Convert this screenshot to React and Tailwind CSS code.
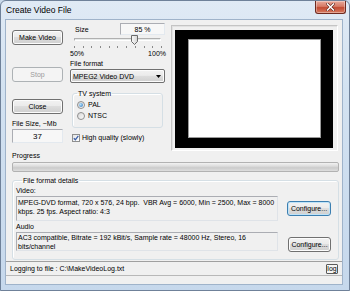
import React from "react";

const btn =
  "flex items-center justify-center rounded-[3px] border border-[#707070] bg-[linear-gradient(#f2f2f2_0%,#ebebeb_45%,#dddddd_50%,#cfcfcf_100%)] shadow-[inset_0_0_0_1px_#fcfcfc] text-black leading-none";

function Radio({ checked, label }) {
  return (
    <div className="flex items-center h-[9px] leading-[9px]">
      <span className="ml-[4px] w-[8px] h-[8px] rounded-full border border-[#8e8f8f] bg-[linear-gradient(135deg,#d8d8d8,#fbfbfb)] flex items-center justify-center">
        {checked && (
          <span className="w-[4px] h-[4px] rounded-full bg-[radial-gradient(circle_at_35%_35%,#b4e4ff,#2a6fb8)]" />
        )}
      </span>
      <span className="ml-[3px]">{label}</span>
    </div>
  );
}

export default function App() {
  return (
    <div className="w-[350px] h-[291px] overflow-hidden bg-[#c9d9ea]">
      <div className="w-[350px] h-[291px] flex flex-col rounded-t-[6px] border border-[#6f8199] bg-[linear-gradient(#e0eaf5_0%,#d3e2f1_30%,#c6d8ec_100%)] font-['Liberation_Sans',Arial,sans-serif] text-[7px] text-black">
        {/* title bar */}
        <div className="h-[18px] flex items-start">
          <div className="pl-[5px] pt-[3px] text-[8.5px] leading-[12px] text-black">Create Video File</div>
          <div className="ml-auto mr-[3px] w-[31px] h-[13px] rounded-b-[3px] border border-t-0 border-[#6e2a20] bg-[linear-gradient(#e9a99a_0%,#d67a66_45%,#c24b33_55%,#d77c62_100%)] shadow-[inset_0_0_0_1px_rgba(255,255,255,0.35)] flex items-center justify-center">
            <svg width="9" height="8" viewBox="0 0 9 8">
              <path d="M1.5 1 L7.5 7 M7.5 1 L1.5 7" stroke="#5a2018" strokeWidth="2.6" strokeLinecap="square" />
              <path d="M1.5 1 L7.5 7 M7.5 1 L1.5 7" stroke="#ffffff" strokeWidth="1.5" strokeLinecap="square" />
            </svg>
          </div>
        </div>

        {/* client area */}
        <div className="flex-1 ml-[4px] mr-[6px] mb-[5px] border border-[#9fb3ca] bg-[#f0f0f0] flex flex-col leading-[9px]">
          {/* top section */}
          <div className="mt-[2px] h-[129px] flex pl-[6px]">
            {/* left column */}
            <div className="w-[51px] flex flex-col">
              <div className={btn + " mt-[8px] h-[15px]"}>Make Video</div>
              <div className="mt-[22px] h-[15px] flex items-center justify-center rounded-[3px] border border-[#adb2b5] bg-[#f4f4f4] text-[#9a9a9a] leading-none">
                Stop
              </div>
              <div className={btn + " mt-[17px] h-[15px]"}>Close</div>
              <div className="mt-[5px] h-[9px] whitespace-nowrap">File Size, ~Mb</div>
              <div className="mt-[1px] h-[14px] border border-[#abadb3] border-b-[#e3e9ef] border-r-[#e3e9ef] bg-[#f7f7f7] flex items-center justify-center text-[8px]">
                37
              </div>
            </div>

            {/* middle column */}
            <div className="ml-[7px] w-[95px] flex flex-col">
              <div className="h-[13px] flex items-start">
                <span className="pl-[5px] mt-[3px]">Size</span>
                <div className="ml-auto mt-[1px] w-[45px] h-[12px] border border-[#abadb3] border-b-[#e3e9ef] border-r-[#e3e9ef] bg-[#f7f7f7] flex items-center justify-center">
                  85 %
                </div>
              </div>
              {/* slider */}
              <div className="relative h-[14px]">
                <div className="absolute left-[4px] top-[3px] w-[87px] h-[3px] border border-[#b0b0b0] border-b-[#ffffff] border-r-[#ffffff] bg-[#e7eaea]" />
                <div className="absolute left-[4px] top-[11px] w-[88px] h-[2px] flex justify-between">
                  {[0, 1, 2, 3, 4, 5, 6, 7, 8, 9, 10].map((i) => (
                    <span key={i} className="w-[1px] h-[2px] bg-[#8a8a8a]" />
                  ))}
                </div>
                <svg className="absolute left-[61px] top-0" width="7" height="10" viewBox="0 0 7 10">
                  <defs>
                    <linearGradient id="th" x1="0" y1="0" x2="1" y2="0">
                      <stop offset="0" stopColor="#fafafa" />
                      <stop offset="1" stopColor="#d4d4d4" />
                    </linearGradient>
                  </defs>
                  <path d="M0.5 0.5 H6.5 V6.5 L3.5 9.5 L0.5 6.5 Z" fill="url(#th)" stroke="#6a6a6a" strokeWidth="1" />
                </svg>
              </div>
              <div className="h-[9px] flex justify-between">
                <span>50%</span>
                <span className="-mr-[1px]">100%</span>
              </div>
              <div className="mt-[1px] h-[9px]">File format</div>
              <div className="mt-[1px] h-[14px] rounded-[2px] border border-[#707070] bg-[linear-gradient(#f2f2f2_0%,#ebebeb_45%,#dddddd_50%,#cfcfcf_100%)] shadow-[inset_0_0_0_1px_#fcfcfc] flex items-center pl-[2px] pr-[3px]">
                <span>MPEG2 Video DVD</span>
                <svg className="ml-auto" width="5" height="3" viewBox="0 0 5 3">
                  <path d="M0 0 H5 L2.5 3 Z" fill="#000" />
                </svg>
              </div>
              <fieldset className="mt-[6px] ml-[2px] w-[91px] h-[39px] rounded-[3px] border border-[#d5dfe5] shadow-[inset_1px_1px_0_#ffffff] flex flex-col">
                <legend className="ml-[4px] px-[1px] h-[9px] leading-[9px]">TV system</legend>
                <div className="mt-[2px]">
                  <Radio checked label="PAL" />
                </div>
                <div className="mt-[2px]">
                  <Radio label="NTSC" />
                </div>
              </fieldset>
              <div className="mt-[5px] ml-[2px] h-[9px] flex items-center">
                <span className="w-[8px] h-[8px] border border-[#8e8f8f] bg-[linear-gradient(135deg,#e4e4e4,#ffffff)] flex items-center justify-center">
                  <svg width="6" height="6" viewBox="0 0 6 6">
                    <path d="M0.8 3.2 L2.4 4.8 L5.3 0.8" fill="none" stroke="#3b5fa8" strokeWidth="1.3" />
                  </svg>
                </span>
                <span className="ml-[2px]">High quality (slowly)</span>
              </div>
            </div>

            {/* preview */}
            <div className="ml-[6px] mt-[3px] w-[167px] h-[126px] border border-[#c4c4c4] border-b-[#ffffff] border-r-[#ffffff] shadow-[inset_1px_1px_0_#e2e2e2] flex flex-col pl-[3px] pt-[4px]">
              <div className="w-[158px] h-[118px] bg-black flex flex-col pl-[13px] pt-[9px]">
                <div className="w-[133px] h-[99px] bg-white border border-[#9a9a9a]" />
              </div>
            </div>
          </div>

          {/* progress */}
          <div className="ml-[6px] h-[9px]">Progress</div>
          <div className="ml-[6px] mt-[2px] w-[327px] h-[10px] rounded-[2px] border border-[#b2b2b2] bg-[linear-gradient(#f2f2f2_0%,#dcdcdc_40%,#cbcbcb_60%,#dedede_100%)]" />

          {/* file format details */}
          <fieldset className="ml-[6px] mt-[4px] w-[327px] h-[84px] rounded-[3px] border border-[#d5dfe5] shadow-[inset_1px_1px_0_#ffffff] flex flex-col pl-[3px]">
            <legend className="ml-[6px] px-[1px] h-[9px] leading-[9px]">File format details</legend>
            <div className="mt-[1px] h-[9px]">Video:</div>
            <div className="mt-[1px] flex items-start">
              <div className="w-[262px] h-[25px] border border-[#abadb3] border-b-[#dfe3e8] border-r-[#dfe3e8] bg-[#f0f0f0] px-[1px] pt-[2px] leading-[8.5px]">
                MPEG-DVD format, 720 x 576, 24 bpp.&nbsp; VBR Avg = 6000, Min = 2500, Max = 8000 kbps. 25 fps. Aspect ratio: 4:3
              </div>
              <div className="ml-[9px] mt-[5px] w-[44px] h-[15px] flex items-center justify-center rounded-[3px] border border-[#3c7fb1] bg-[linear-gradient(#f2f2f2_0%,#ebebeb_45%,#dddddd_50%,#cfcfcf_100%)] shadow-[inset_0_0_0_1px_#bfe3f8] leading-none">
                Configure...
              </div>
            </div>
            <div className="mt-[1px] h-[9px]">Audio</div>
            <div className="mt-[1px] flex items-start">
              <div className="w-[262px] h-[19px] border border-[#abadb3] border-b-[#dfe3e8] border-r-[#dfe3e8] bg-[#f0f0f0] px-[1px] pt-[1px] leading-[8.5px]">
                AC3 compatible, Bitrate = 192 kBit/s, Sample rate = 48000 Hz, Stereo, 16 bits/channel
              </div>
              <div className={btn + " ml-[10px] mt-[5px] w-[43px] h-[15px]"}>Configure...</div>
            </div>
          </fieldset>

          {/* log bar */}
          <div className="mt-[1px] border-t border-b border-[#a0a0a0] border-b-[#b8b8b8] h-[15px] flex items-center pl-[4px] pr-[4px]">
            <span className="whitespace-nowrap">Logging to file : C:\MakeVideoLog.txt</span>
            <div className="ml-auto w-[12px] h-[10px] flex items-center justify-center rounded-[1px] border border-[#5a5a5a] bg-[#f6f6f6] leading-none">
              log
            </div>
          </div>
        </div>
      </div>
    </div>
  );
}
